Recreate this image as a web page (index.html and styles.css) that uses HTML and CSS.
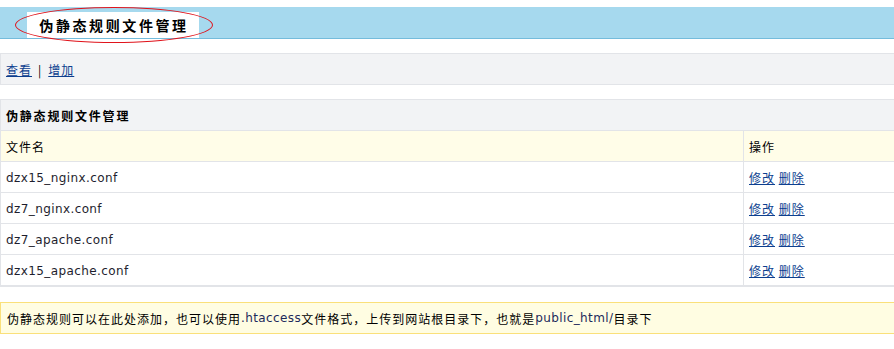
FILE: index.html
```html
<!DOCTYPE html>
<html>
  <head>
    <meta charset="utf-8">
    <link rel="stylesheet" href="styles.css">
  </head>
  <body>
    <div class="topbar">
      <div class="tab">
        伪静态规则文件管理
        <span class="mark"></span>
      </div>
    </div>

    <div class="nav">
      <a href="#">查看</a> <span class="sep">|</span> <a href="#">增加</a>
    </div>

    <table class="list">
      <tr class="title">
        <td colspan="2">伪静态规则文件管理</td>
      </tr>
      <tr class="head">
        <td>文件名</td>
        <td class="ops">操作</td>
      </tr>
      <tr>
        <td class="file">dzx15_nginx.conf</td>
        <td class="ops"><a href="#">修改</a> <a href="#">删除</a></td>
      </tr>
      <tr>
        <td class="file">dz7_nginx.conf</td>
        <td class="ops"><a href="#">修改</a> <a href="#">删除</a></td>
      </tr>
      <tr>
        <td class="file">dz7_apache.conf</td>
        <td class="ops"><a href="#">修改</a> <a href="#">删除</a></td>
      </tr>
      <tr>
        <td class="file">dzx15_apache.conf</td>
        <td class="ops"><a href="#">修改</a> <a href="#">删除</a></td>
      </tr>
    </table>

    <div class="note">
      伪静态规则可以在此处添加，也可以使用<span class="code">.htaccess</span>文件格式，上传到网站根目录下，也就是<span class="code">public_html/</span>目录下
    </div>
  </body>
</html>
```

FILE: styles.css
```css
body {
  margin: 0;
  font-family: "Noto Sans CJK SC", "DejaVu Sans", sans-serif;
  font-size: 12px;
  letter-spacing: 1px;
  color: #000;
}
a {
  color: #0d3f8f;
}
.topbar {
  margin-top: 7px;
  height: 32px;
  background: #a6d9ee;
  border-bottom: 1px solid #74bcdc;
  box-sizing: border-box;
  display: flex;
  align-items: flex-end;
  padding-left: 27px;
}
.tab {
  position: relative;
  width: 172px;
  height: 26px;
  background: #fff;
  font-size: 14px;
  font-weight: bold;
  display: flex;
  align-items: center;
  justify-content: center;
  letter-spacing: 2.6px;
  padding-left: 2px;
  box-sizing: border-box;
}
.mark {
  position: absolute;
  left: -12px;
  top: -5px;
  width: 198px;
  height: 36px;
  border: 1.5px solid #e0141c;
  border-radius: 50%;
  box-sizing: border-box;
}
.nav {
  margin-top: 14px;
  height: 32px;
  box-sizing: border-box;
  background: #f2f3f5;
  border: 1px solid #e2e4e8;
  border-right: none;
  display: flex;
  align-items: center;
  padding-left: 5px;
  gap: 4px;
}
.sep {
  margin: 0 2px;
}
.list {
  margin-top: 14px;
  width: 100%;
  border-collapse: collapse;
  border-top: 1px solid #e2e4e8;
  border-bottom: 2px solid #e2e4e8;
  border-left: 1px solid #e2e4e8;
}
.list td {
  height: 29px;
  padding: 1px 5px 0;
  border-bottom: 1px solid #e2e4e8;
}
.list .title td {
  background: #f2f3f5;
  font-weight: bold;
  letter-spacing: 1.8px;
}
.list .head td {
  background: #fffde8;
}
.list .ops {
  width: 140px;
  border-left: 1px solid #e2e4e8;
}
.file,
.code {
  font-family: "DejaVu Sans", sans-serif;
  font-size: 12px;
  letter-spacing: 0.4px;
}
.file {
  color: #1e1e2e;
}
.code {
  color: #1d2a5c;
}
.note {
  margin-top: 15px;
  height: 32px;
  box-sizing: border-box;
  background: #fffde2;
  border-top: 1px solid #fae07a;
  border-bottom: 1px solid #fae07a;
  border-left: 1px solid #fae07a;
  display: flex;
  align-items: center;
  padding-left: 6px;
}
```
